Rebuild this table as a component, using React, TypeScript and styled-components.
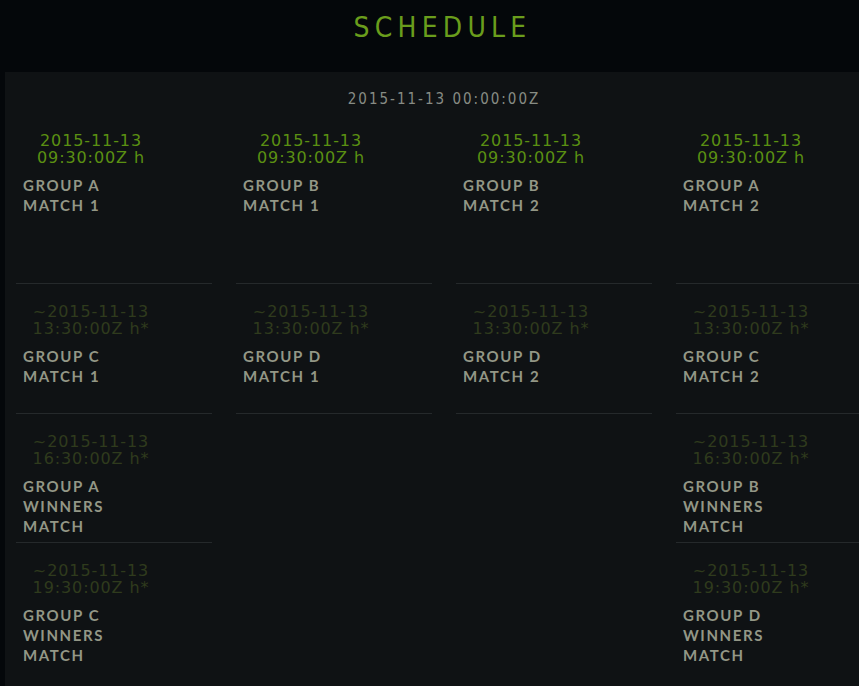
import React from "react";
import styled, { createGlobalStyle } from "styled-components";

const GlobalStyle = createGlobalStyle`
	html,
	body {
		margin: 0;
		padding: 0;
		background: #04070a;
		overflow: hidden;
	}
`;

const Page = styled.div`
	width: 881px;
	min-height: 686px;
	background: #04070a;
`;

const Header = styled.header`
	height: 72px;
	display: flex;
	justify-content: center;
	padding-top: 10px;
	box-sizing: border-box;
`;

const Title = styled.h1`
	margin: 0;
	font-family: "DejaVu Sans Condensed", "DejaVu Sans", sans-serif;
	font-stretch: condensed;
	font-weight: 400;
	font-size: 28px;
	line-height: 36px;
	letter-spacing: 5.2px;
	color: #6a9d1c;
	padding-left: 4px;
`;

const Panel = styled.section`
	margin-left: 5px;
	min-height: 614px;
	background: #0f1214;
	padding: 17px 9px 0 11px;
`;

const DayLabel = styled.div`
	font-family: "DejaVu Sans Condensed", "DejaVu Sans", sans-serif;
	font-stretch: condensed;
	font-size: 15px;
	line-height: 20px;
	letter-spacing: 2px;
	color: #878c84;
	text-align: center;
	margin-bottom: 4px;
`;

const Grid = styled.div`
	display: grid;
	grid-template-columns: repeat(4, 196px);
	column-gap: 24px;
	align-items: start;
`;

const Column = styled.div`
	display: flex;
	flex-direction: column;
`;

const Card = styled.div<{ $height: number; $last?: boolean }>`
	height: ${(p) => p.$height}px;
	border-bottom: ${(p) => (p.$last ? "none" : "1px solid #25292b")};
	padding-top: 19px;
	box-sizing: border-box;
	display: flex;
	flex-direction: column;
`;

const Time = styled.div<{ $live?: boolean }>`
	width: 150px;
	text-align: center;
	font-family: "DejaVu Sans", sans-serif;
	font-size: 16px;
	line-height: 17px;
	letter-spacing: 0.9px;
	color: ${(p) => (p.$live ? "#5b9012" : "#2f3b1d")};
`;

const Match = styled.div`
	margin-top: 9px;
	padding-left: 7px;
	font-family: Lato, "Open Sans", sans-serif;
	font-weight: 700;
	font-size: 15px;
	line-height: 20px;
	letter-spacing: 1.6px;
	color: #939786;
	text-transform: uppercase;
`;

type Game = { time: string; live?: boolean; lines: string[] };

const rowHeights = [171, 130, 129, 129];

const columns: Game[][] = [
	[
		{ time: "09:30:00Z h", live: true, lines: ["Group A", "Match 1"] },
		{ time: "13:30:00Z h*", lines: ["Group C", "Match 1"] },
		{ time: "16:30:00Z h*", lines: ["Group A", "Winners", "Match"] },
		{ time: "19:30:00Z h*", lines: ["Group C", "Winners", "Match"] },
	],
	[
		{ time: "09:30:00Z h", live: true, lines: ["Group B", "Match 1"] },
		{ time: "13:30:00Z h*", lines: ["Group D", "Match 1"] },
	],
	[
		{ time: "09:30:00Z h", live: true, lines: ["Group B", "Match 2"] },
		{ time: "13:30:00Z h*", lines: ["Group D", "Match 2"] },
	],
	[
		{ time: "09:30:00Z h", live: true, lines: ["Group A", "Match 2"] },
		{ time: "13:30:00Z h*", lines: ["Group C", "Match 2"] },
		{ time: "16:30:00Z h*", lines: ["Group B", "Winners", "Match"] },
		{ time: "19:30:00Z h*", lines: ["Group D", "Winners", "Match"] },
	],
];

const App = () => {
	return (
		<Page>
			<GlobalStyle />
			<Header>
				<Title>SCHEDULE</Title>
			</Header>
			<Panel>
				<DayLabel>2015-11-13 00:00:00Z</DayLabel>
				<Grid>
					{columns.map((games, c) => (
						<Column key={c}>
							{games.map((g, i) => (
								<Card key={i} $height={rowHeights[i]} $last={i === 3}>
									<Time $live={g.live}>
										{g.live ? "" : "~"}2015-11-13
										<br />
										{g.time}
									</Time>
									<Match>
										{g.lines.map((l) => (
											<div key={l}>{l}</div>
										))}
									</Match>
								</Card>
							))}
						</Column>
					))}
				</Grid>
			</Panel>
		</Page>
	);
};

export default App;
